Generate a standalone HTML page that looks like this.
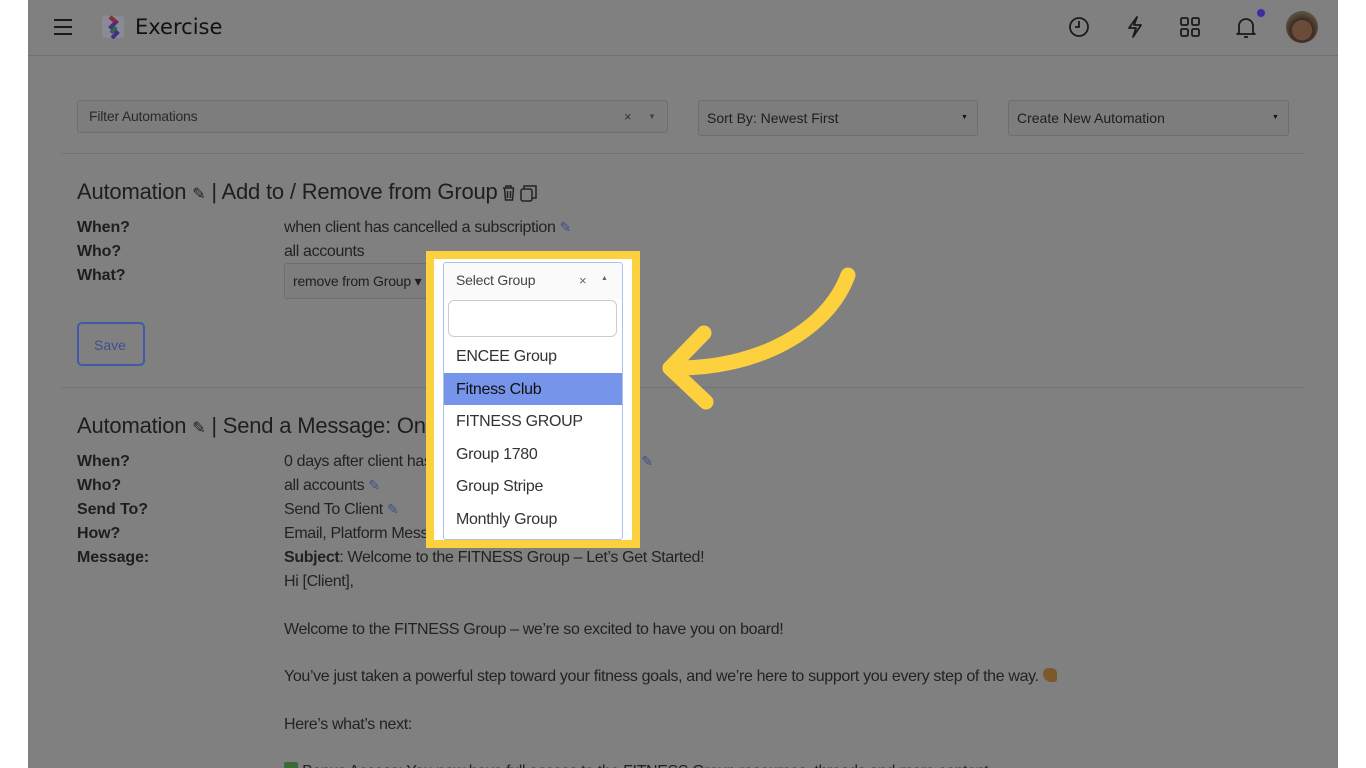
<!DOCTYPE html>
<html><head><meta charset="utf-8"><style>
*{box-sizing:border-box;margin:0;padding:0}
body{width:1366px;height:768px;overflow:hidden;background:#fff;font-family:"Liberation Sans",sans-serif;position:relative}
#main{position:absolute;left:28px;top:0;width:1310px;height:768px;background:#808080;overflow:hidden}
.a{position:absolute;white-space:nowrap}
.lbl{font-weight:bold;font-size:16px;color:#1e1e1e;letter-spacing:-0.1px}
.val{font-size:16px;color:#222;letter-spacing:-0.35px}
.h{font-size:22px;color:#1e1e1e;letter-spacing:-0.2px}
.box{position:absolute;border:1px solid #6e6e6e;border-radius:3px;background:#7d7d7d}
.pen{color:#3f4f8a;font-size:14px}
</style></head><body>
<div id="main">
 <div class="a" style="left:0;top:55px;width:1310px;height:1px;background:#707070"></div>
 <div class="a" style="left:26px;top:19px;width:18px;height:2px;background:#1a1a1a;box-shadow:0 7px 0 #1a1a1a,0 14px 0 #1a1a1a"></div>
 <svg class="a" style="left:74px;top:15px" width="24" height="24" viewBox="0 0 24 24"><rect x="0" y="1" width="22" height="22" rx="3" fill="#8a8a95"/><path d="M8 2l6 5-5 5 6 6-5 5" stroke="#4a2a8a" stroke-width="4" fill="none"/><path d="M14 12l-5 6" stroke="#2a6a4a" stroke-width="4"/><path d="M8 2l6 5" stroke="#8a2a3a" stroke-width="4"/></svg>
 <div class="a" style="left:107px;top:15px;font-size:21px;color:#111;font-family:'DejaVu Sans',sans-serif;font-weight:500">Exercise</div>
 <svg class="a" style="left:1040px;top:16px" width="22" height="22" viewBox="0 0 22 22" fill="none" stroke="#1a1a1a" stroke-width="1.8"><circle cx="11" cy="11" r="9"/><path d="M11 5v6h-4"/></svg>
 <svg class="a" style="left:1096px;top:15px" width="22" height="24" viewBox="0 0 22 24" fill="none" stroke="#1a1a1a" stroke-width="1.8" stroke-linejoin="round"><path d="M13 2L5 13h7l-3 9 8-12h-7z"/></svg>
 <svg class="a" style="left:1152px;top:17px" width="20" height="20" viewBox="0 0 20 20" fill="none" stroke="#1a1a1a" stroke-width="1.8"><rect x="1" y="1" width="7" height="7" rx="1.5"/><rect x="12" y="1" width="7" height="7" rx="1.5"/><rect x="1" y="12" width="7" height="7" rx="1.5"/><rect x="12" y="12" width="7" height="7" rx="1.5"/></svg>
 <svg class="a" style="left:1207px;top:15px" width="22" height="24" viewBox="0 0 22 24" fill="none" stroke="#1a1a1a" stroke-width="1.8"><path d="M4 18V11a7 7 0 0114 0v7l2 1H2z" stroke-linejoin="round"/><path d="M9 22h4"/></svg>
 <div class="a" style="left:1229px;top:9px;width:8px;height:8px;border-radius:50%;background:#3b2fa0"></div>
 <div class="a" style="left:1258px;top:11px;width:32px;height:32px;border-radius:50%;background:radial-gradient(circle at 50% 60%,#6a4a38 0 40%,#3a2a22 42%,#5a5040 70%)"></div>

 <div class="box" style="left:49px;top:100px;width:591px;height:33px"></div>
 <div class="a" style="left:61px;top:108px;font-size:14px;color:#2a2a2a;letter-spacing:-0.2px">Filter Automations</div>
 <div class="a" style="left:596px;top:109px;font-size:13px;color:#333">×</div>
 <div class="a" style="left:620px;top:112px;font-size:8px;color:#444">▼</div>
 <div class="box" style="left:670px;top:100px;width:280px;height:36px"></div>
 <div class="a" style="left:679px;top:110px;font-size:14px;color:#1e1e1e">Sort By: Newest First</div>
 <div class="a" style="left:933px;top:114px;font-size:7px;color:#111">▼</div>
 <div class="box" style="left:980px;top:100px;width:281px;height:36px"></div>
 <div class="a" style="left:989px;top:110px;font-size:14px;color:#1e1e1e">Create New Automation</div>
 <div class="a" style="left:1244px;top:114px;font-size:7px;color:#111">▼</div>
 <div class="a" style="left:33px;top:153px;width:1243px;height:1px;background:#727272"></div>

 <div class="a h" style="left:49px;top:179px">Automation <span style="font-size:16px">✎</span> | Add to / Remove from Group</div>
 <svg class="a" style="left:473px;top:184px" width="40" height="18" viewBox="0 0 40 18" fill="none" stroke="#222" stroke-width="1.5"><path d="M2 4h11M5 4V2h5v2M3.5 4l1 12h7l1-12M6.5 7v7M9.5 7v7"/><rect x="20" y="5" width="11" height="12" rx="2"/><path d="M23 5V2h12v12h-4"/></svg>
 <div class="a lbl" style="left:49px;top:219px">When?</div>
 <div class="a lbl" style="left:49px;top:243px">Who?</div>
 <div class="a lbl" style="left:49px;top:267px">What?</div>
 <div class="a val" style="left:256px;top:219px">when client has cancelled a subscription <span class="pen">✎</span></div>
 <div class="a val" style="left:256px;top:243px">all accounts</div>
 <div class="box" style="left:256px;top:263px;width:150px;height:36px"></div>
 <div class="a" style="left:265px;top:273px;font-size:14px;color:#1e1e1e;letter-spacing:-0.2px">remove from Group ▾</div>
 <div class="a" style="left:49px;top:322px;width:68px;height:44px;border:2px solid #3f5aa6;border-radius:5px"></div>
 <div class="a" style="left:66px;top:337px;font-size:14px;color:#3f4f8a">Save</div>
 <div class="a" style="left:33px;top:387px;width:1243px;height:1px;background:#727272"></div>

 <div class="a h" style="left:49px;top:413px">Automation <span style="font-size:16px">✎</span> | Send a Message: One Time</div>
 <div class="a lbl" style="left:49px;top:453px">When?</div>
 <div class="a lbl" style="left:49px;top:477px">Who?</div>
 <div class="a lbl" style="left:49px;top:501px">Send To?</div>
 <div class="a lbl" style="left:49px;top:525px">How?</div>
 <div class="a lbl" style="left:49px;top:549px">Message:</div>
 <div class="a val" style="left:256px;top:453px">0 days after client has purchased FITNESS GROUP <span class="pen">✎</span></div>
 <div class="a val" style="left:256px;top:477px">all accounts <span class="pen">✎</span></div>
 <div class="a val" style="left:256px;top:501px">Send To Client <span class="pen">✎</span></div>
 <div class="a val" style="left:256px;top:525px">Email, Platform Message</div>
 <div class="a val" style="left:256px;top:549px"><b>Subject</b>: Welcome to the FITNESS Group – Let’s Get Started!</div>
 <div class="a val" style="left:256px;top:573px">Hi [Client],</div>
 <div class="a val" style="left:256px;top:621px">Welcome to the FITNESS Group – we’re so excited to have you on board!</div>
 <div class="a val" style="left:256px;top:668px">You’ve just taken a powerful step toward your fitness goals, and we’re here to support you every step of the way. <span style="display:inline-block;width:14px;height:14px;background:#7a5a2a;border-radius:40% 40% 20% 60%;vertical-align:-1px"></span></div>
 <div class="a val" style="left:256px;top:716px">Here’s what’s next:</div>
 <div class="a val" style="left:256px;top:762px"><span style="display:inline-block;width:14px;height:14px;background:#3a6a3a;border-radius:2px"></span> Bonus Access: You now have full access to the FITNESS Group resources, threads and more content</div>

 <div class="a" style="left:398px;top:251px;width:214px;height:297px;border:8px solid #fdd03e;background:#fff"></div>
 <div class="a" style="left:415px;top:262px;width:180px;height:278px;border:1px solid #a8c4ee;border-radius:3px;background:#fff;overflow:hidden">
  <div style="height:36px;background:#fafafa"></div>
  <div class="a" style="left:12px;top:9px;font-size:14px;color:#444;letter-spacing:-0.2px">Select Group</div>
  <div class="a" style="left:135px;top:10px;font-size:13px;color:#666">×</div>
  <div class="a" style="left:157px;top:12px;font-size:7px;color:#666">▲</div>
  <div class="a" style="left:4px;top:37px;width:169px;height:37px;border:1px solid #ccc;border-radius:6px"></div>
  <div class="a" style="left:12px;top:85px;font-size:16px;color:#333;letter-spacing:-0.3px">ENCEE Group</div>
  <div class="a" style="left:0;top:110px;width:180px;height:32px;background:#7694e9"></div>
  <div class="a" style="left:12px;top:118px;font-size:16px;color:#111;letter-spacing:-0.3px">Fitness Club</div>
  <div class="a" style="left:12px;top:150px;font-size:16px;color:#333;letter-spacing:-0.3px">FITNESS GROUP</div>
  <div class="a" style="left:12px;top:183px;font-size:16px;color:#333;letter-spacing:-0.3px">Group 1780</div>
  <div class="a" style="left:12px;top:215px;font-size:16px;color:#333;letter-spacing:-0.3px">Group Stripe</div>
  <div class="a" style="left:12px;top:248px;font-size:16px;color:#333;letter-spacing:-0.3px">Monthly Group</div>
 </div>
 <svg class="a" style="left:0;top:0" width="1310" height="768"><g fill="none" stroke="#fdd03e" stroke-width="15" stroke-linecap="round" stroke-linejoin="round"><path d="M820 275C800 330 730 370 642 368"/><path d="M676 333L642 368 678 402"/></g></svg>
</div>
</body></html>
